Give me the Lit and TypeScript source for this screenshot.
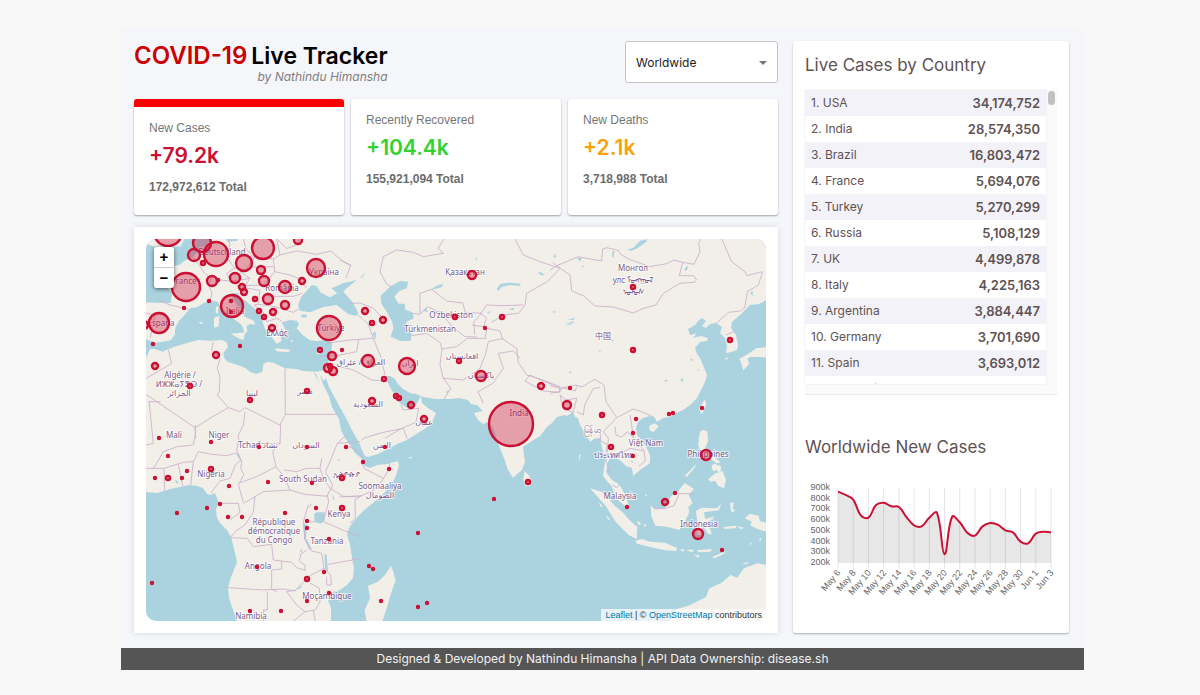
import { LitElement, html, svg, css } from "lit";
import { customElement, property, state } from "lit/decorators.js";
import { classMap } from "lit/directives/class-map.js";

interface Stat {
  label: string;
  value: string;
  total: string;
  tone: string;
}

const STATS: Stat[] = [
  { label: "New Cases", value: "+79.2k", total: "172,972,612 Total", tone: "cases" },
  { label: "Recently Recovered", value: "+104.4k", total: "155,921,094 Total", tone: "recovered" },
  { label: "New Deaths", value: "+2.1k", total: "3,718,988 Total", tone: "deaths" },
];

const COUNTRIES: [string, string][] = [
  ["USA", "34,174,752"],
  ["India", "28,574,350"],
  ["Brazil", "16,803,472"],
  ["France", "5,694,076"],
  ["Turkey", "5,270,299"],
  ["Russia", "5,108,129"],
  ["UK", "4,499,878"],
  ["Italy", "4,225,163"],
  ["Argentina", "3,884,447"],
  ["Germany", "3,701,690"],
  ["Spain", "3,693,012"],
  ["Colombia", "3,488,046"],
];

// Daily new cases in thousands, May 6 to Jun 3.
const DAILY = [
  866, 835, 791, 645, 623, 741, 763, 729, 723, 629, 552, 542, 623, 670, 281, 632, 580, 483, 455, 542, 573, 558, 505,
  486, 399, 384, 474, 492, 486,
];
const DAYS = [
  "May 6", "May 8", "May 10", "May 12", "May 14", "May 16", "May 18", "May 20", "May 22", "May 24", "May 26",
  "May 28", "May 30", "Jun 1", "Jun 3",
];

// Map sheets: drawn at three times the map scale, each placed at its own origin.
interface Sheet {
  at: [number, number];
  land?: string[];
  water?: string[];
  lakes?: string[];
  borders?: string[];
}

const MAINLAND =
  "146,230 770,230 766,300 759,304 750,305 745,310 740,315 732,322 731,328 736,335 738,345 737,350 731,352 726,353 727,346 725,338 720,333 722,327 716,323 710,324 706,328 702,326 706,321 702,318 698,321 695,325 688,329 690,335 694,334 697,333 693,338 701,336 708,338 707,341 700,342 695,348 697,354 700,358 703,365 707,375 705,382 702,388 697,398 690,405 683,410 676,413 670,417 663,418 657,422 655,418 650,416 643,418 638,422 636,428 637,435 642,441 646,447 650,455 650,463 640,470 633,476 632,468 626,466 621,461 615,457 611,455 608,462 606,472 612,480 617,483 621,487 625,495 627,500 629,507 625,506 619,501 615,497 612,487 603,476 604,468 606,458 602,448 600,438 594,439 590,442 586,435 583,430 580,425 578,418 575,417 573,412 567,416 565,415 557,417 552,423 547,427 540,436 532,441 523,447 524,455 525,462 522,470 517,474 513,478 508,470 505,461 502,453 499,446 497,440 493,428 488,422 483,424 478,420 474,413 483,411 477,405 471,404 468,400 459,398 450,399 435,399 423,397 416,394 410,393 403,389 397,383 395,379 390,376 387,376 384,378 388,383 391,389 395,395 398,401 402,405 408,408 414,407 417,403 421,396 422,403 428,408 436,413 433,420 430,425 423,430 413,436 407,440 397,444 390,448 378,454 368,457 365,456 362,450 360,445 357,439 353,432 347,420 341,409 335,398 329,387 326,378 324,381 320,375 323,384 329,396 332,407 339,419 341,430 345,438 350,445 355,453 361,458 365,466 370,468 377,465 387,464 398,461 399,466 395,478 390,487 381,496 373,503 363,511 353,522 349,528 347,535 350,544 352,558 354,568 353,578 347,585 340,590 333,592 328,600 331,608 331,621 331,640 240,640 237,621 232,607 229,598 228,588 231,577 237,562 235,553 233,545 231,537 227,530 220,523 217,518 216,509 219,503 215,493 210,495 207,494 203,488 197,486 189,485 180,487 170,489 157,493 146,492";

const SHEETS: Sheet[] = [
  {
    at: [-16, -14],
    water: [
      "40,340 60,347 75,353 100,350 122,346 134,330 136,308 147,288 162,272 180,250 200,247 222,234 240,226 262,230 276,248 300,274 320,288 335,300 345,325 352,320 350,302 362,296 375,300 372,288 345,275 328,255 318,235 308,222 305,205 322,203 332,216 352,232 380,256 394,272 398,290 405,312 420,330 440,356 455,348 450,325 468,318 455,292 480,285 500,287 507,296 500,310 518,330 540,346 562,348 585,345 606,352 604,384 592,420 580,436 560,440 520,438 500,432 465,430 430,413 412,410 400,418 397,440 378,447 360,440 345,428 330,422 292,410 282,398 280,385 294,365 290,352 275,345 240,347 205,345 180,352 130,366 98,380 75,372 60,372 48,400 40,400",
      "510,257 504,240 514,215 532,196 545,180 560,183 572,203 600,217 622,205 604,190 640,175 680,165 650,190 640,200 668,232 684,262 680,272 655,268 620,240 580,246 540,262",
      "513,270 528,268 532,276 516,278",
      "40,55 75,65 110,66 152,64 165,40 250,36 238,52 228,62 208,72 198,86 186,98 162,108 148,120 132,122 100,130 76,138 70,178 112,190 126,200 122,234 40,232",
      "550,440 560,450 568,478 562,462",
      "285,36 330,36 320,48 292,50",
    ],
    land: [
      "258,245 266,244 263,268 257,262",
      "252,278 268,272 266,304 252,308",
      "302,326 346,322 340,346 322,338",
      "435,370 482,374 474,382 440,379",
      "558,382 582,370 574,384 564,388",
      "88,38 150,38 140,56 112,62 90,60",
      "205,292 220,290 214,298",
      "468,328 476,330 472,336",
      "482,345 490,347 484,352",
    ],
    borders: [
      "250,350 245,375 270,400 262,430 270,455 268,500 262,510 295,548",
      "48,508 195,608 240,580 295,548 330,560 345,548 450,600 466,568 465,430",
      "195,608 197,640",
      "466,568 622,568",
      "57,530 92,530",
      "57,528 70,655 48,660",
      "115,375 125,415 75,445 48,460",
      "345,560 340,600 325,630 325,650 320,675 335,710",
      "85,225 120,240 175,252",
      "48,265 75,270 70,300 60,340",
      "240,228 246,204 236,180 244,160 224,145 200,110 188,95",
      "234,182 262,178 272,165 300,168 330,165 360,160",
      "300,165 290,145 314,130 290,95 300,60 294,42",
      "290,95 330,85 370,100 348,135 314,130",
      "340,42 348,70 372,98 430,102 450,90 440,42",
      "370,100 366,126 430,125",
      "450,90 500,78 560,88 602,78 640,110 664,122",
      "430,100 434,140 480,150 505,160 530,190",
      "434,140 402,180 418,214 490,214 518,205",
      "330,140 360,160 345,182 402,180",
      "320,182 352,190 390,196 384,238 372,240 400,262",
      "384,238 430,244 490,262 506,252",
      "400,262 410,290 440,280 455,288",
      "440,245 436,275",
      "440,42 470,70 500,60 508,42",
    ],
  },
  {
    at: [194, -14],
    water: [
      "122,212 150,185 180,168 205,170 200,190 178,198 163,215 176,236 194,236 196,254 216,262 222,280 200,290 198,308 215,325 212,348 182,348 152,335 160,310 157,292 140,260 124,236",
    ],
    lakes: [
      "470,192 482,176 510,173 540,176 542,183 508,180 484,186 476,198",
      "270,196 290,182 310,176 305,186 285,192",
      "252,258 258,248 264,262",
      "505,252 522,248 520,256",
      "595,140 608,144 612,152 598,148",
      "60,160 75,140 68,156",
      "98,325 108,320 106,345",
      "318,500 326,496 322,508",
      "640,95 646,85 648,98",
      "405,102 412,96 410,106",
      "440,262 452,258 446,266",
    ],
    borders: [
      "155,185 140,178 120,140 130,95 170,75 220,82 250,95 310,85 294,70 312,42",
      "525,42 550,90 600,110 660,130 622,170 560,205 555,240 535,265 490,270 455,292",
      "425,262 440,240 480,242 550,240",
      "240,265 240,205 275,193 320,228 368,234 376,262 425,265 402,290 404,330",
      "215,265 240,268 262,245 300,262 340,308 375,335 410,336",
      "215,332 260,325 300,352 306,372 300,420 310,460 332,490 312,523",
      "306,372 350,365 382,340 436,340 440,310 480,318",
      "310,460 370,465 420,430 436,390 445,350 490,340",
      "395,300 430,305 440,280 420,262",
      "430,535 414,500 458,475 490,430 475,385 520,378 540,400",
      "480,318 488,342 530,370 535,412 560,450 600,462 660,485",
      "555,468 570,450 614,470 660,488 658,502 610,498 555,468",
      "85,298 100,340 124,400 135,450",
      "0,425 40,435 95,465 130,467",
      "-40,355 30,345 100,340",
      "30,235 60,234 100,250 134,285",
      "52,268 85,298 110,300",
      "135,640 185,610 228,592 236,550 190,555 182,540",
      "-60,395 0,390 50,380 56,345",
      "0,105 32,120 18,160",
    ],
  },
  {
    at: [404, -14],
    land: [
      "298,602 315,595 326,604 310,622 298,615",
      "465,522 469,540 455,568 447,550",
      "568,402 600,383 618,370 652,366 652,398 632,396 600,396 592,402 598,416 580,436 573,412",
      "450,622 470,618 474,640 448,640",
      "523,400 535,398 530,404",
      "615,385 640,380 636,392 612,396",
    ],
    lakes: [
      "232,74 250,68 270,48 292,42 288,52 262,70 244,78",
      "186,95 188,78 194,78 190,98",
      "80,98 96,98 90,110",
      "402,134 412,122 414,128 408,138",
      "52,285 74,278 72,284",
      "44,296 72,289 70,295",
      "40,302 66,296 62,300",
      "180,342 192,346 188,350",
      "600,205 608,198 608,212",
      "390,464 400,460 398,472",
      "340,468 352,463 350,470",
      "8,258 20,260 12,264",
      "56,440 66,440 60,446",
      "144,376 156,378 148,380",
      "94,122 102,122 98,128",
      "420,402 428,402 426,410",
      "442,432 448,434 444,438",
    ],
    borders: [
      "20,122 50,110 85,95 125,103 155,108 158,72 170,68 205,76 212,88 240,104 300,125 350,116 372,105 398,112 388,152 430,152 440,165 432,172 390,175 340,205 318,240 275,252 250,264 190,246 135,243 100,212 65,198 60,150 20,122",
      "398,112 432,118 450,80 446,55 452,42",
      "515,42 545,110 585,140 590,152 638,140 625,180 592,200 584,250",
      "500,295 535,262 572,258 584,246",
      "527,330 552,320",
      "0,136 20,122 8,112",
      "0,482 30,490 78,480 96,486 134,463 162,480 168,530 200,578 250,552 280,562 312,577",
      "30,510 40,552 70,562 80,520 48,525 30,510",
      "80,560 100,570 104,540 130,490 150,488",
      "0,505 30,500 36,488 76,498 80,484",
      "200,578 160,620 175,640 172,680",
      "240,570 245,600 250,640",
    ],
  },
  {
    at: [-16, 186],
    lakes: [
      "552,268 560,262 584,262 582,288 572,296 554,292",
      "522,295 530,300 528,340 545,372 538,374 522,340",
      "583,386 590,390 594,440 586,436",
      "608,206 614,226 608,222",
      "134,162 142,168 146,176 138,174",
      "510,375 516,372 514,386",
      "495,496 518,480 512,490",
      "540,238 548,234 536,250",
      "322,86 332,92 326,98",
      "622,102 630,104 626,110",
    ],
    borders: [
      "190,110 205,80 245,88 290,92 318,84 335,110 332,130 342,150 325,178 340,232",
      "80,115 100,80 142,65 190,60 197,20 196,0",
      "80,115 70,130 102,130 160,112 190,110 182,180",
      "48,130 70,130",
      "102,130 104,196",
      "145,118 158,183",
      "242,205 270,168 300,160 316,120 332,105",
      "325,175 380,155 438,125 428,80 450,55 452,0",
      "452,55 360,56",
      "340,235 375,215 400,200 480,195 524,208 592,214",
      "438,125 462,155 480,195",
      "462,135 500,140 530,130 570,130 575,100",
      "660,20 622,55 600,110 586,140 608,180 592,212",
      "570,130 580,160 600,190",
      "592,210 596,230 580,290 650,320 690,335",
      "622,55 690,50",
      "600,190 640,214 690,216",
      "268,235 325,235 330,262 300,285",
      "375,215 370,262 345,300 318,318 302,336",
      "302,338 352,340 370,365 425,358 430,405 455,408 455,432 425,435 425,492 440,500",
      "295,488 400,495 460,492 497,498",
      "455,408 485,412 500,428 526,436 524,420 508,408 512,388 530,375",
      "535,240 520,290 524,340 545,378 575,385 582,430 540,452 495,496 470,500",
      "594,418 640,410 695,400",
      "470,500 500,540 525,560 556,555 570,530 568,490 540,474",
      "412,500 412,555 400,555 400,588",
      "582,430 602,450 604,480 590,480 590,455",
      "525,560 490,588",
      "550,558 556,588",
      "535,292 552,290",
    ],
  },
  {
    at: [194, 186],
    land: [
      "153,422 160,440 167,468 158,490 150,515 140,550 126,592 80,592 74,555 90,520 84,482 112,472 135,450",
      "553,138 566,150 575,168 570,183 556,183 550,165",
      "204,96 218,97 212,101",
    ],
    borders: [
      "65,45 75,38 130,22 190,10 202,42",
      "66,112 72,130 130,160 150,130 148,112",
      "130,160 112,190 65,212 45,225 46,280 30,295",
      "15,60 50,75 68,98",
      "0,216 65,212",
    ],
  },
  {
    at: [404, 186],
    land: [
      "450,20 460,14 472,20 474,50 462,76 480,88 512,112 500,115 474,96 456,84 445,62 446,44",
      "475,162 496,145 518,138 528,165 522,190 504,182 496,168 480,170",
      "492,116 514,124 510,144 498,134 490,140 484,124",
      "405,152 438,118 436,126 410,156",
      "302,240 315,252 345,248 362,215 385,198 404,174 432,192 416,210 428,234 415,246 418,262 405,290 388,315 350,305 316,302 304,274",
      "120,190 158,202 192,240 218,262 238,285 262,306 260,342 236,330 198,292 168,244 140,212",
      "255,348 275,342 300,350 345,353 382,370 378,378 345,376 310,368 262,356",
      "388,374 404,372 400,380",
      "408,374 432,374 426,382",
      "440,376 486,372 482,380 446,382",
      "432,388 450,392 444,398",
      "486,396 528,378 520,388 494,400",
      "438,258 454,248 500,250 514,236 506,256 462,262 466,282 496,274 472,292 486,328 474,326 456,300 452,330 440,330 442,290",
      "584,280 600,266 626,272 630,288 650,294 650,320 622,312 600,300 606,290",
      "380,552 415,542 468,516 478,490 514,474 542,450 562,458 582,430 622,415 652,420 652,592 360,592",
      "540,235 552,232 548,250 556,258 544,262",
      "520,306 560,302 556,310 524,312",
      "560,304 584,308 572,312",
      "575,414 600,412 588,418",
      "280,298 290,300 284,306",
      "262,286 274,296 264,300",
      "286,208 292,210 288,216",
      "88,88 92,90 86,112",
      "146,232 158,244 152,246",
      "168,270 180,282 174,284",
      "628,338 634,340 630,352",
      "600,355 606,352 602,362",
    ],
    lakes: ["242,104 250,110 246,114"],
    borders: [
      "195,5 198,30 215,36 232,20 262,48 282,78 286,108 266,124",
      "150,10 152,48 172,58 166,100 178,140",
      "214,102 222,80 240,70 282,78",
      "186,180 200,188 208,182",
      "305,242 315,252 345,250 372,242 388,206 430,206",
    ],
  },
];

// Case circles as [x, y, radius].
const CIRCLES: [number, number, number][] = [
  [22, -7, 14], [56, 4, 9], [48, 16, 6], [70, 15, 12], [57, 24, 2], [66, 42, 5], [72, 41, 1], [89, 39, 5], [98, 24, 8],
  [117, 9, 11], [115, 31, 4], [118, 42, 5], [96, 48, 3], [98, 53, 3], [109, 60, 2], [122, 60, 5], [139, 48, 6],
  [156, 42, 3], [170, 29, 9], [152, 1, 4], [139, 66, 4], [113, 72, 2], [127, 73, 3], [118, 78, 2], [126, 89, 3],
  [86, 67, 11], [85, 62, 1], [85, 73, 1], [63, 62, 1], [38, 69, 1], [13, 84, 10], [-2, 86, 4], [7, 105, 1],
  [9, 127, 3], [44, 147, 2], [94, 107, 1], [70, 116, 3], [104, 161, 2], [161, 152, 2], [183, 89, 12], [174, 111, 2],
  [196, 111, 1], [186, 117, 4], [182, 129, 4], [187, 132, 4], [184, 127, 2], [40, 48, 14], [219, 72, 3], [226, 84, 2],
  [237, 81, 3], [222, 122, 6], [261, 127, 8], [238, 140, 2], [250, 157, 2], [253, 159, 2], [226, 162, 3],
  [265, 166, 3], [278, 180, 3], [326, 36, 4], [309, 78, 2], [356, 78, 2], [339, 89, 1], [313, 122, 2], [335, 137, 5],
  [395, 147, 3], [365, 185, 22], [487, 48, 2], [487, 111, 2], [584, 101, 2], [424, 149, 1], [421, 166, 4],
  [456, 176, 2], [490, 180, 1], [523, 175, 1], [527, 174, 1], [556, 169, 1], [487, 194, 1], [13, 199, 1],
  [65, 203, 1], [113, 208, 1], [161, 208, 1], [200, 208, 1], [22, 217, 1], [9, 239, 1], [22, 239, 2], [36, 239, 1],
  [41, 232, 1], [65, 230, 2], [83, 247, 1], [122, 243, 1], [166, 244, 1], [196, 239, 2], [31, 274, 1], [61, 269, 1],
  [74, 265, 1], [82, 278, 1], [96, 278, 1], [139, 274, 1], [170, 269, 1], [196, 269, 2], [161, 282, 1],
  [161, 289, 1], [183, 300, 1], [111, 328, 1], [178, 333, 1], [161, 340, 2], [6, 344, 1], [183, 354, 1],
  [161, 362, 1], [104, 372, 1], [135, 372, 1], [239, 208, 1], [217, 223, 1], [243, 230, 1], [348, 260, 1],
  [382, 243, 2], [272, 294, 1], [223, 327, 1], [227, 330, 1], [235, 362, 1], [272, 368, 1], [281, 364, 1],
  [465, 208, 2], [487, 217, 1], [560, 216, 5], [481, 268, 1], [519, 263, 3], [529, 254, 1], [552, 295, 5],
  [576, 311, 1],
];

const LABELS: [string, number, number][] = [
  ["Deutschland", 76, 16], ["France", 38, 45], ["España", 15, 87], ["Italia", 89, 75], ["România", 136, 52],
  ["Україна", 178, 36], ["Ελλάς", 131, 97], ["Türkiye", 185, 92], ["Algérie /", 34, 139], ["ⵍⵣⵣⴰⵢⴻⵔ /", 33, 148],
  ["الجزائر", 33, 157], ["ليبيا", 106, 157], ["مصر", 159, 155], ["Mali", 28, 199], ["Niger", 73, 199],
  ["Tchad تشاد", 112, 209], ["السودان", 160, 209], ["Nigeria", 65, 238], ["South Sudan", 157, 243],
  ["ኢትዮጵያ", 200, 238], ["Soomaaliya", 234, 250], ["الصومال", 234, 259], ["Kenya", 193, 278],
  ["République", 128, 286], ["démocratique", 128, 295], ["du Congo", 128, 304], ["Tanzania", 181, 305],
  ["Angola", 112, 330], ["Moçambique", 181, 360], ["Namibia", 105, 380], ["Қазақстан", 319, 36],
  ["O‘zbekiston", 305, 79], ["Türkmenistan", 284, 93], ["العراق / عێراق", 215, 126], ["ایران", 264, 127],
  ["افغانستان", 316, 120], ["پاکستان", 335, 139], ["السعودية", 222, 168], ["عمان", 278, 186], ["اليمن", 236, 209],
  ["India", 373, 177], ["Монгол", 487, 32], ["улс ᠮᠣᠩᠭᠣᠯ", 487, 44], ["ᠤᠯᠤᠰ", 487, 56], ["中国", 457, 100],
  ["မြန်မာ", 446, 194], ["Việt Nam", 500, 207], ["ประเทศไทย", 468, 219], ["Philippines", 562, 218],
  ["Malaysia", 474, 260], ["Indonesia", 553, 288],
];

@customElement("case-map")
class CaseMap extends LitElement {
  static styles = css`
    :host {
      display: block;
      position: relative;
      overflow: hidden;
      border-radius: 10px;
      background: #aad3df;
    }
    .canvas {
      display: block;
      width: 100%;
      aspect-ratio: 620 / 382;
    }
    .land {
      fill: #f2efe9;
    }
    .water {
      fill: #aad3df;
    }
    .border {
      fill: none;
      stroke: #cbb0cb;
      stroke-width: 2.6px;
      stroke-linejoin: round;
    }
    .name {
      font: 8px "Noto Sans", "DejaVu Sans", "Noto Sans CJK SC", sans-serif;
      fill: #7d5a8a;
      stroke: #ffffff;
      stroke-opacity: 0.7;
      stroke-width: 2px;
      stroke-linejoin: round;
      paint-order: stroke;
      text-anchor: middle;
    }
    .circle {
      fill: #cc1034;
      fill-opacity: 0.36;
      stroke: #cc1034;
      stroke-width: 2.4px;
    }
    .zoom {
      position: absolute;
      top: 8px;
      left: 8px;
      display: flex;
      flex-direction: column;
      border-radius: 3px;
      box-shadow: 0 1px 4px rgba(0, 0, 0, 0.6);
      overflow: hidden;
    }
    .step {
      width: 20px;
      height: 20px;
      padding: 0;
      border: 0;
      background: #ffffff;
      color: #000000;
      font: bold 15px/20px "Liberation Sans", sans-serif;
    }
    .step + .step {
      border-top: 1px solid #cccccc;
      height: 21px;
    }
    .credit {
      position: absolute;
      right: 0;
      bottom: 0;
      padding: 0 4px;
      background: rgba(255, 255, 255, 0.7);
      color: #333333;
      font: 9px/12px "Liberation Sans", sans-serif;
    }
    .link {
      color: #0078a8;
      text-decoration: none;
    }
  `;

  private sheet(s: Sheet) {
    return svg`<g transform="translate(${s.at[0]} ${s.at[1]}) scale(0.33333)">
      ${(s.water ?? []).map((p) => svg`<polygon class="water" points=${p}></polygon>`)}
      ${(s.land ?? []).map((p) => svg`<polygon class="land" points=${p}></polygon>`)}
      ${(s.lakes ?? []).map((p) => svg`<polygon class="water" points=${p}></polygon>`)}
      ${(s.borders ?? []).map((p) => svg`<polyline class="border" points=${p}></polyline>`)}
    </g>`;
  }

  render() {
    return html`
      <svg class="canvas" viewBox="0 0 620 382" preserveAspectRatio="xMidYMid slice" role="img" aria-label="Case map">
        <g transform="translate(-146 -239)"><polygon class="land" points=${MAINLAND}></polygon></g>
        ${SHEETS.map((s) => this.sheet(s))}
        ${LABELS.map(([t, x, y]) => svg`<text class="name" x=${x} y=${y}>${t}</text>`)}
        ${CIRCLES.map(([x, y, r]) => svg`<circle class="circle" cx=${x} cy=${y} r=${r}></circle>`)}
      </svg>
      <div class="zoom">
        <button class="step" aria-label="Zoom in">+</button>
        <button class="step" aria-label="Zoom out">−</button>
      </div>
      <div class="credit">
        <a class="link" href="#leaflet">Leaflet</a> | © <a class="link" href="#osm">OpenStreetMap</a> contributors
      </div>
    `;
  }
}

@customElement("case-chart")
class CaseChart extends LitElement {
  static styles = css`
    :host {
      display: block;
    }
    .plot {
      display: block;
      width: 100%;
    }
    .grid {
      stroke: #000000;
      stroke-opacity: 0.1;
    }
    .area {
      fill: #e7e7e7;
    }
    .line {
      fill: none;
      stroke: #cc1034;
      stroke-width: 2px;
    }
    .tick {
      font: 9px "Liberation Sans", sans-serif;
      fill: #666666;
      text-anchor: end;
    }
  `;

  private curve() {
    const pts = DAILY.map((v, i) => [33 + (i * 213) / 28, 83 - ((v - 200) * 75) / 700]);
    const dist = (a: number[], b: number[]) => Math.hypot(a[0] - b[0], a[1] - b[1]);
    const handles = pts.map((p, i) => {
      const prev = pts[i - 1] ?? p;
      const next = pts[i + 1] ?? p;
      const sum = dist(prev, p) + dist(p, next);
      const a = (0.4 * dist(prev, p)) / sum;
      const b = (0.4 * dist(p, next)) / sum;
      const dx = next[0] - prev[0];
      const dy = next[1] - prev[1];
      return [p[0] - a * dx, p[1] - a * dy, p[0] + b * dx, p[1] + b * dy];
    });
    let d = `M${pts[0].join(" ")}`;
    for (let i = 1; i < pts.length; i++) {
      const a = handles[i - 1];
      const b = handles[i];
      d += `C${a[2]} ${a[3]} ${b[0]} ${b[1]} ${pts[i][0]} ${pts[i][1]}`;
    }
    return d;
  }

  render() {
    const d = this.curve();
    const levels = [900, 800, 700, 600, 500, 400, 300, 200];
    return html`
      <svg class="plot" viewBox="0 0 252 120" role="img" aria-label="Worldwide new cases by day">
        <path class="area" d="${d}V83H33Z"></path>
        ${DAYS.map((day, i) => {
          const x = 33 + (i * 213) / 14;
          return svg`<line class="grid" x1=${x} x2=${x} y1="8" y2="89"></line>
            <text class="tick" transform="translate(${x + 3} 93) rotate(-50)">${day}</text>`;
        })}
        ${levels.map((v, i) => svg`<text class="tick" x="25" y=${10 + (i * 75) / 7}>${v}k</text>`)}
        <path class="line" d=${d}></path>
      </svg>
    `;
  }
}

@customElement("stat-card")
class StatCard extends LitElement {
  @property({ attribute: false }) stat!: Stat;
  @property({ type: Boolean }) active = false;

  static styles = css`
    :host {
      display: block;
    }
    .card {
      box-sizing: border-box;
      height: 116px;
      padding: 12px 15px;
      border-radius: 3px;
      background: #ffffff;
      box-shadow: 0 1px 2px rgba(0, 0, 0, 0.35);
    }
    .active {
      border-top: 8px solid #fc0000;
    }
    .label,
    .value,
    .total {
      margin: 0;
    }
    .label {
      font: 12px/18px "Liberation Sans", sans-serif;
      color: #757575;
    }
    .value {
      margin-top: 5px;
      font: 600 21px/28px Inter, sans-serif;
    }
    .cases {
      color: #cc1034;
    }
    .recovered {
      color: #32d232;
    }
    .deaths {
      color: #fba10a;
    }
    .total {
      margin-top: 8px;
      font: bold 12px/18px "Liberation Sans", sans-serif;
      color: #6c6c6c;
    }
  `;

  render() {
    const s = this.stat;
    return html`<section class=${classMap({ card: true, active: this.active })}>
      <p class="label">${s.label}</p>
      <h2 class=${classMap({ value: true, [s.tone]: true })}>${s.value}</h2>
      <p class="total">${s.total}</p>
    </section>`;
  }
}

@customElement("app-root")
class AppRoot extends LitElement {
  @state() private selected = 0;

  static styles = css`
    :host {
      display: flow-root;
      min-height: 100vh;
      background: #f8f8f8;
      font-family: Inter, sans-serif;
    }
    .shell {
      margin: 28px 116px 25px 121px;
      background: #f5f6fa;
    }
    .body {
      display: grid;
      grid-template-columns: minmax(0, 7fr) minmax(0, 3fr);
      gap: 15px;
      padding: 13px 15px 15px 13px;
    }
    .top {
      display: flex;
      justify-content: space-between;
      margin-bottom: 16px;
    }
    .brand {
      text-align: right;
    }
    .title {
      display: flex;
      align-items: baseline;
      gap: 4px;
      margin: 0;
      font-size: 23px;
      line-height: 30px;
      font-weight: 600;
      color: #000000;
    }
    .accent {
      font-size: 24px;
      color: #cc0000;
    }
    .author {
      margin: 0;
      font-size: 12px;
      line-height: 12px;
      font-style: italic;
      color: #808080;
    }
    .picker {
      position: relative;
      display: block;
      width: 153px;
    }
    .select {
      appearance: none;
      box-sizing: border-box;
      width: 100%;
      height: 42px;
      padding: 0 10px;
      border: 1px solid #c4c4c4;
      border-radius: 3px;
      background: #ffffff;
      color: #1c1c1c;
      font: 12px Inter, sans-serif;
    }
    .caret {
      position: absolute;
      right: 11px;
      top: 20px;
      border: 4px solid transparent;
      border-top-color: #757575;
      pointer-events: none;
    }
    .stats {
      display: grid;
      grid-template-columns: repeat(3, minmax(0, 1fr));
      gap: 7px;
    }
    .map-card {
      margin-top: 12px;
      padding: 12px;
      background: #ffffff;
      box-shadow: 0 0 6px rgba(0, 0, 0, 0.12);
    }
    .side {
      padding: 12px;
      border-radius: 3px;
      background: #ffffff;
      box-shadow: 0 1px 2px rgba(0, 0, 0, 0.3);
      color: #5f5253;
    }
    .heading {
      margin: 0;
      font-size: 17px;
      line-height: 24px;
      font-weight: 400;
    }
    .scroller {
      display: grid;
      grid-template-columns: minmax(0, 1fr) 11px;
      grid-template-rows: 294px 10px;
      margin: 13px 0 40px;
      background: #fafafa;
      border-bottom: 1px solid #e8e8e8;
    }
    .view {
      overflow: hidden;
      background: #ffffff;
      box-shadow: 0 0 1px #c8c8c8;
    }
    .thumb {
      width: 7px;
      height: 14px;
      margin: 1px 2px;
      border-radius: 4px;
      background: #c1c1c1;
    }
    .table {
      width: 100%;
      border-collapse: collapse;
      font-size: 12px;
      line-height: 26px;
    }
    .row:nth-child(odd) {
      background: #f3f2f8;
    }
    .country {
      padding: 0 6px;
      font-weight: 400;
      text-align: left;
    }
    .count {
      padding: 0 6px;
      font-size: 13px;
      font-weight: 600;
      text-align: right;
    }
    .chart {
      margin-top: 21px;
    }
    .footer {
      background: #555555;
      color: #f2f2f2;
      font-size: 12px;
      line-height: 22px;
      text-align: center;
    }
  `;

  render() {
    return html`
      <div class="shell">
        <main class="body">
          <div>
            <header class="top">
              <div class="brand">
                <h1 class="title"><span class="accent">COVID-19</span> <span>Live Tracker</span></h1>
                <p class="author">by Nathindu Himansha</p>
              </div>
              <label class="picker">
                <select class="select" aria-label="Region">
                  <option>Worldwide</option>
                  ${COUNTRIES.map(([name]) => html`<option>${name}</option>`)}
                </select>
                <span class="caret"></span>
              </label>
            </header>
            <div class="stats">
              ${STATS.map(
                (s, i) =>
                  html`<stat-card .stat=${s} .active=${this.selected === i} @click=${() => (this.selected = i)}></stat-card>`
              )}
            </div>
            <div class="map-card"><case-map></case-map></div>
          </div>
          <aside class="side">
            <h2 class="heading">Live Cases by Country</h2>
            <div class="scroller">
              <div class="view">
                <table class="table">
                  <tbody>
                    ${COUNTRIES.map(
                      ([name, count], i) => html`<tr class="row">
                        <th class="country" scope="row">${i + 1}. ${name}</th>
                        <td class="count">${count}</td>
                      </tr>`
                    )}
                  </tbody>
                </table>
              </div>
              <div class="thumb"></div>
            </div>
            <h2 class="heading">Worldwide New Cases</h2>
            <case-chart class="chart"></case-chart>
          </aside>
        </main>
        <footer class="footer">Designed &amp; Developed by Nathindu Himansha | API Data Ownership: disease.sh</footer>
      </div>
    `;
  }
}
